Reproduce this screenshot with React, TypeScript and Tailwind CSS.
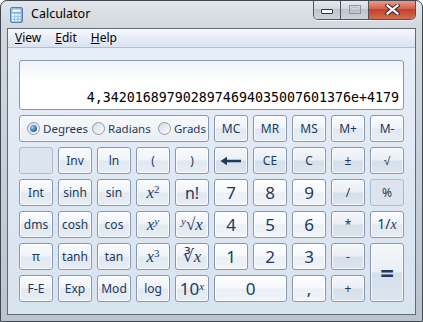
import type { ReactNode } from "react";

const ui = "font-['Noto_Sans',sans-serif]";
const serif = "font-['Liberation_Serif',serif] italic";

type Kind = "fn" | "num" | "op" | "off";

const kinds: Record<Kind, string> = {
  fn: "border-[#8a98ad] bg-[linear-gradient(#f9fbfd_0%,#eff3f8_49%,#e0e8f1_51%,#e7edf5_100%)] shadow-[inset_0_0_0_1px_rgba(255,255,255,0.8)]",
  num: "border-[#8a98ad] bg-[linear-gradient(#fdfeff_0%,#f6f8fb_49%,#ebf0f6_51%,#f1f4f9_100%)] shadow-[inset_0_0_0_1px_rgba(255,255,255,0.9)]",
  op: "border-[#8a98ad] bg-[linear-gradient(#f4f7fa_0%,#eaeff5_49%,#d5dfea_51%,#dce5ef_100%)] shadow-[inset_0_0_0_1px_rgba(255,255,255,0.75)]",
  off: "border-[#aebbcc] bg-[#dce5ef]",
};

function Key({ k = "fn", className = "", children }: { k?: Kind; className?: string; children?: ReactNode }) {
  return (
    <button
      className={`flex items-center justify-center rounded-[3px] border text-[12px] leading-none text-[#1e395b] ${ui} ${kinds[k]} ${className}`}
    >
      {children}
    </button>
  );
}

function Radio({ on, label, w = "" }: { on?: boolean; label: string; w?: string }) {
  return (
    <div className={`flex items-center gap-[3px] ${w}`}>
      <span className="flex h-[13px] w-[13px] shrink-0 items-center justify-center rounded-full border border-[#8f9aa8] bg-[linear-gradient(135deg,#d6dbe1,#fbfcfd)]">
        {on && (
          <span className="h-[7px] w-[7px] rounded-full bg-[radial-gradient(circle_at_35%_35%,#9fd0f5,#2a6fb8_60%,#17457e)]" />
        )}
      </span>
      <span className="text-[11.5px] text-[#1e395b]">{label}</span>
    </div>
  );
}

function CalcIcon() {
  return (
    <svg width="13" height="16" viewBox="0 0 13 16">
      <defs>
        <linearGradient id="cb" x1="0" y1="0" x2="1" y2="1">
          <stop offset="0" stopColor="#b9dcf5" />
          <stop offset="1" stopColor="#6ea7d8" />
        </linearGradient>
      </defs>
      <rect x="0.5" y="0.5" width="12" height="15" rx="1.5" fill="url(#cb)" stroke="#4f80b0" />
      <rect x="2" y="2" width="9" height="3.5" fill="#eef7fd" stroke="#5d8fbd" strokeWidth="0.6" />
      {[0, 1, 2].map((r) =>
        [0, 1, 2].map((c) => (
          <rect key={`${r}${c}`} x={2 + c * 3.2} y={7 + r * 2.8} width="2.2" height="1.8" fill="#f4f9fd" />
        ))
      )}
    </svg>
  );
}

function Caption() {
  return (
    <div className="-mt-px mr-[6px] flex h-[20px] overflow-hidden rounded-b-[5px] border border-t-0 border-[#4b5562] shadow-[0_1px_0_rgba(255,255,255,0.7)]">
      <div className="flex w-[27px] items-center justify-center border-r border-[#4b5562] bg-[linear-gradient(#e9ecf0,#d3d9e0_45%,#bcc4ce_50%,#cdd4dc)] pt-[4px]">
        <svg width="12" height="5" viewBox="0 0 12 5">
          <rect x="0.5" y="0.5" width="11" height="4" rx="0.5" fill="#fff" stroke="#2f3742" />
        </svg>
      </div>
      <div className="flex w-[28px] items-center justify-center border-r border-[#4b5562] bg-[linear-gradient(#e9ecf0,#d3d9e0_45%,#bcc4ce_50%,#cdd4dc)]">
        <svg width="12" height="9" viewBox="0 0 12 9">
          <rect x="0.5" y="0.5" width="11" height="8" fill="none" stroke="#8c939c" />
          <rect x="2.5" y="2.5" width="7" height="4" fill="none" stroke="#b8bec6" />
        </svg>
      </div>
      <div className="flex w-[46px] items-center justify-center bg-[linear-gradient(#eba291,#d5654f_45%,#c2412c_50%,#d46a51)]">
        <svg width="15" height="11" viewBox="0 0 15 11">
          <path d="M2.5 1.5 L12.5 9.5 M12.5 1.5 L2.5 9.5" stroke="#3b2f2f" strokeWidth="4.2" strokeLinecap="square" />
          <path d="M2.5 1.5 L12.5 9.5 M12.5 1.5 L2.5 9.5" stroke="#fff" strokeWidth="2.2" strokeLinecap="square" />
        </svg>
      </div>
    </div>
  );
}

const X = ({ children }: { children: ReactNode }) => <span className={`${serif} text-[17px]`}>{children}</span>;
const Sup = ({ children, it }: { children: ReactNode; it?: boolean }) => (
  <sup className={`text-[11px] ${it ? "italic" : "not-italic"} font-['Liberation_Serif',serif]`}>{children}</sup>
);
const Big = ({ children }: { children: ReactNode }) => <span className="text-[17px]">{children}</span>;

export default function App() {
  return (
    <div
      className={`h-[322px] w-[423px] overflow-hidden rounded-t-[7px] border border-[#3e4853] bg-[linear-gradient(#e2e6ea_0%,#d2d8de_8%,#c6cdd5_60%,#bcc3cc_100%)] ${ui}`}
    >
      <div className="flex h-[27px] items-start justify-between">
        <div className="flex items-start pl-[9px]">
          <div className="mt-[6px]">
            <CalcIcon />
          </div>
          <span className="ml-[8px] mt-[5px] text-[12.5px] leading-[16px] text-black">Calculator</span>
        </div>
        <Caption />
      </div>

      <div className="mx-[6px] border border-[#5f6a77] bg-[linear-gradient(#e8eff8,#dde7f3_60%,#d8e3f0)]">
        <div className="flex h-[19px] items-center border-b border-[#b3bdcc] bg-[linear-gradient(#f7f9fd,#e6ecf6_55%,#dbe3f1)] text-[12px] text-black">
          <span className="px-[7px]">
            <span className="underline">V</span>iew
          </span>
          <span className="px-[7px]">
            <span className="underline">E</span>dit
          </span>
          <span className="px-[7px]">
            <span className="underline">H</span>elp
          </span>
        </div>

        <div className="px-[11px] pb-[12px] pt-[12px]">
          <div className="flex h-[50px] items-end justify-end rounded-[3px] border border-[#8a98ad] bg-[linear-gradient(#eef4fb,#ffffff_45%)] pb-[5px] pr-[4px]">
            <span className="font-['DejaVu_Sans_Mono',monospace] text-[13.3px] leading-none text-black">
              4,3420168979028974694035007601376e+4179
            </span>
          </div>

          <div className="mt-[5px] grid grid-cols-[repeat(10,34px)] grid-rows-[repeat(6,27px)] gap-[5px]">
            <div className="col-span-5 flex items-center rounded-[3px] border border-[#8a98ad] bg-[linear-gradient(#f7f9fc,#e8eef5)] pl-[7px] shadow-[inset_0_0_0_1px_rgba(255,255,255,0.7)]">
              <Radio on label="Degrees" w="w-[65px]" />
              <Radio label="Radians" w="w-[66px]" />
              <Radio label="Grads" />
            </div>
            <Key>MC</Key>
            <Key>MR</Key>
            <Key>MS</Key>
            <Key>M+</Key>
            <Key>M-</Key>

            <Key k="off" />
            <Key>Inv</Key>
            <Key>ln</Key>
            <Key>(</Key>
            <Key>)</Key>
            <Key k="op">
              <svg width="22" height="10" viewBox="0 0 22 10">
                <path d="M3 5 H21" stroke="#1e395b" strokeWidth="2.4" />
                <path d="M0.5 5 L7 0.8 V9.2 Z" fill="#1e395b" />
              </svg>
            </Key>
            <Key k="op">CE</Key>
            <Key k="op">C</Key>
            <Key k="op">±</Key>
            <Key k="op">√</Key>

            <Key>Int</Key>
            <Key>sinh</Key>
            <Key>sin</Key>
            <Key>
              <X>
                x<Sup>2</Sup>
              </X>
            </Key>
            <Key>
              <span className="text-[16px]">n!</span>
            </Key>
            <Key k="num">
              <Big>7</Big>
            </Key>
            <Key k="num">
              <Big>8</Big>
            </Key>
            <Key k="num">
              <Big>9</Big>
            </Key>
            <Key k="op">/</Key>
            <Key k="off">%</Key>

            <Key>dms</Key>
            <Key>cosh</Key>
            <Key>cos</Key>
            <Key>
              <X>
                x<Sup it>y</Sup>
              </X>
            </Key>
            <Key>
              <X>
                <Sup it>y</Sup>
                <span className="not-italic">√</span>x
              </X>
            </Key>
            <Key k="num">
              <Big>4</Big>
            </Key>
            <Key k="num">
              <Big>5</Big>
            </Key>
            <Key k="num">
              <Big>6</Big>
            </Key>
            <Key k="op">*</Key>
            <Key>
              <span className="text-[14px]">
                1/<span className={serif}>x</span>
              </span>
            </Key>

            <Key>π</Key>
            <Key>tanh</Key>
            <Key>tan</Key>
            <Key>
              <X>
                x<Sup>3</Sup>
              </X>
            </Key>
            <Key>
              <X>
                <span className="not-italic">∛</span>x
              </X>
            </Key>
            <Key k="num">
              <Big>1</Big>
            </Key>
            <Key k="num">
              <Big>2</Big>
            </Key>
            <Key k="num">
              <Big>3</Big>
            </Key>
            <Key k="op">-</Key>
            <Key k="op" className="row-span-2">
              <span className="text-[24px] font-bold">=</span>
            </Key>

            <Key>F-E</Key>
            <Key>Exp</Key>
            <Key>Mod</Key>
            <Key>log</Key>
            <Key>
              <span className="text-[17px]">
                10<Sup it>x</Sup>
              </span>
            </Key>
            <Key k="num" className="col-span-2">
              <Big>0</Big>
            </Key>
            <Key k="num">
              <Big>,</Big>
            </Key>
            <Key k="op">+</Key>
          </div>
        </div>
      </div>
    </div>
  );
}
